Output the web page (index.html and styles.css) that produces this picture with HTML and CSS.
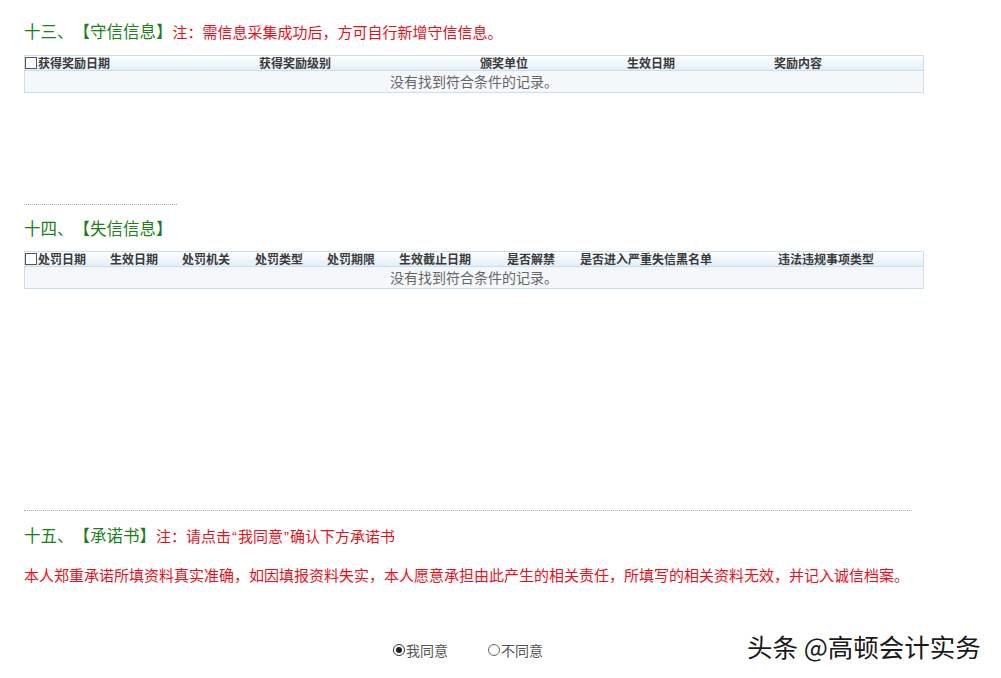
FILE: index.html
```html
<!DOCTYPE html>
<html lang="zh-CN">
<head>
<meta charset="UTF-8">
<title>信息采集</title>
<link rel="stylesheet" href="styles.css">
</head>
<body>
<div id="page">
	<div class="sec sec13">
		<h3 class="title">十三、【守信信息】<span class="note">注：需信息采集成功后，方可自行新增守信信息。</span></h3>
		<div class="grid">
			<div class="head head13">
				<span><i class="chk"></i>获得奖励日期</span>
				<span>获得奖励级别</span>
				<span>颁奖单位</span>
				<span>生效日期</span>
				<span>奖励内容</span>
			</div>
			<div class="empty">没有找到符合条件的记录。</div>
		</div>
	</div>

	<div class="line short"></div>

	<div class="sec sec14">
		<h3 class="title">十四、【失信信息】</h3>
		<div class="grid">
			<div class="head head14">
				<span><i class="chk"></i>处罚日期</span>
				<span>生效日期</span>
				<span>处罚机关</span>
				<span>处罚类型</span>
				<span>处罚期限</span>
				<span>生效截止日期</span>
				<span>是否解禁</span>
				<span>是否进入严重失信黑名单</span>
				<span>违法违规事项类型</span>
			</div>
			<div class="empty">没有找到符合条件的记录。</div>
		</div>
	</div>

	<div class="line long"></div>

	<div class="sec sec15">
		<h3 class="title">十五、【承诺书】<span class="note">注：请点击<span class="q">“</span>我同意<span class="q">”</span>确认下方承诺书</span></h3>
		<p class="promise">本人郑重承诺所填资料真实准确，如因填报资料失实，本人愿意承担由此产生的相关责任，所填写的相关资料无效，并记入诚信档案。</p>
		<div class="agree">
			<label><i class="radio on"></i>我同意</label>
			<label><i class="radio"></i>不同意</label>
		</div>
	</div>

	<div class="mark">头条 @高顿会计实务</div>
</div>
</body>
</html>
```

FILE: styles.css
```css
body,
h3,
p {
	margin: 0;
	padding: 0;
}

body {
	font-family: "Noto Sans CJK SC", "Liberation Sans", sans-serif;
	background: #fff;
	text-spacing-trim: space-all;
}

#page {
	position: relative;
	width: 1001px;
	height: 678px;
	padding-left: 24px;
	box-sizing: border-box;
	overflow: hidden;
}

.title {
	font-size: 16.5px;
	font-weight: normal;
	color: #1b7f1b;
	height: 20px;
	line-height: 20px;
	white-space: nowrap;
}

.title .note {
	font-size: 15px;
	color: #e8101a;
}

.title .q {
	font-family: "Liberation Sans", sans-serif;
	padding: 0 1px;
}

.sec13 {
	padding-top: 21px;
}

.sec13 .title {
	margin-bottom: 14px;
}

.grid {
	width: 898px;
	border: 1px solid #c8dfee;
}

.head {
	display: grid;
	height: 14px;
	line-height: 14px;
	font-size: 12px;
	font-weight: bold;
	color: #3a3a3a;
	background: linear-gradient(#ffffff, #e3eff8);
	border-bottom: 1px solid #c8dfee;
	white-space: nowrap;
}

.head span {
	display: flex;
	align-items: center;
}

.head13 {
	grid-template-columns: 234px 221px 147px 147px 1fr;
}

.head14 {
	grid-template-columns: 85px 72px 73px 72px 72px 108px 73px 198px 1fr;
}

.chk {
	display: inline-block;
	width: 10px;
	height: 10px;
	border: 1px solid #555;
	background: #fff;
	margin-right: 1px;
}

.empty {
	height: 21px;
	line-height: 21px;
	text-align: center;
	font-size: 14px;
	color: #666;
	background: #f5f8fb;
}

.line {
	border-top: 1px dotted #aaa;
}

.line.short {
	width: 153px;
	margin-top: 111px;
}

.line.long {
	width: 888px;
	margin-top: 221px;
}

.sec14 {
	padding-top: 13px;
}

.sec14 .title {
	margin-bottom: 13px;
}

.sec15 {
	padding-top: 14px;
}

.promise {
	margin-top: 20px;
	font-size: 15px;
	line-height: 20px;
	color: #e8101a;
	white-space: nowrap;
}

.agree {
	display: flex;
	gap: 40px;
	margin-top: 55px;
	padding-left: 369px;
	font-size: 14px;
	line-height: 20px;
	color: #555;
}

.agree label {
	display: flex;
	align-items: center;
}

.radio {
	position: relative;
	display: inline-block;
	width: 10px;
	height: 10px;
	border: 1px solid #666;
	border-radius: 50%;
	margin-right: 1px;
}

.radio.on {
	border-color: #333;
}

.radio.on:after {
	content: "";
	position: absolute;
	left: 2px;
	top: 2px;
	width: 6px;
	height: 6px;
	border-radius: 50%;
	background: #222;
}

.mark {
	position: absolute;
	left: 747px;
	top: 630px;
	font-size: 25.5px;
	line-height: 32px;
	color: #1a1a1a;
	white-space: nowrap;
	text-shadow: 1px 1px 0 #fff, -1px -1px 0 #fff, 1px -1px 0 #fff, -1px 1px 0 #fff;
}
```
